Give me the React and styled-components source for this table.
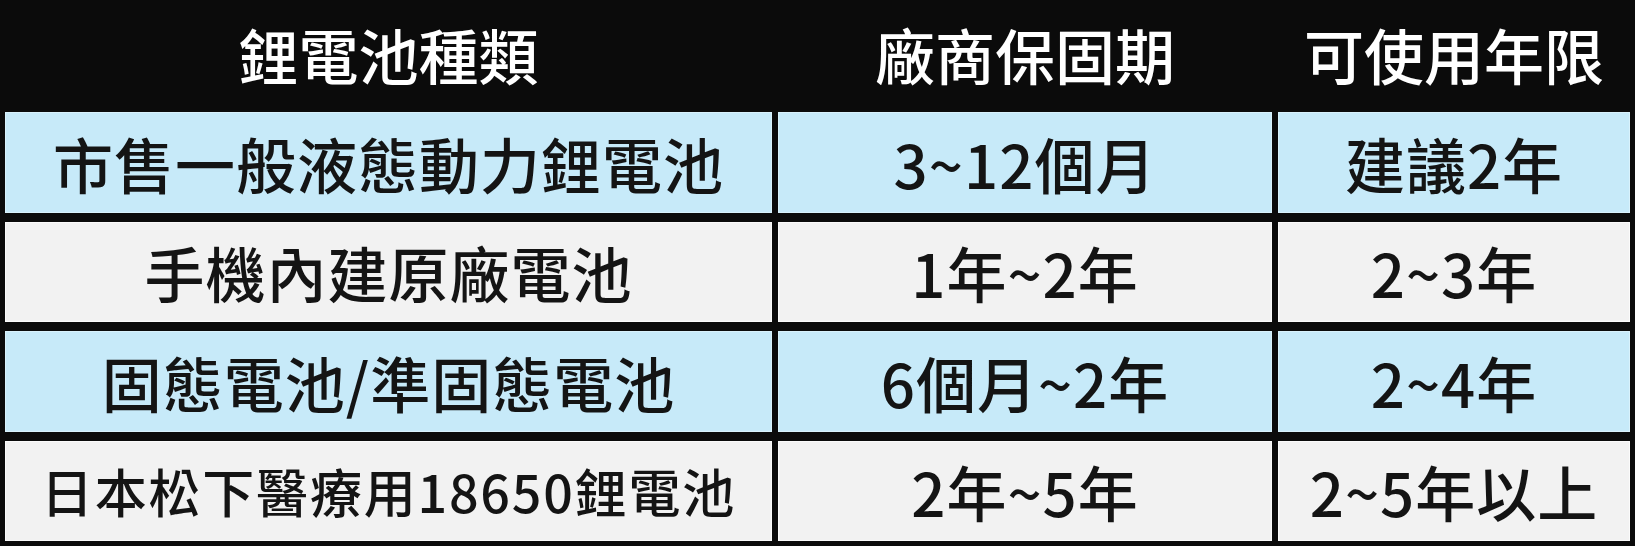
import React from "react";
import styled, { createGlobalStyle } from "styled-components";

const Global = createGlobalStyle`
  html, body { margin: 0; padding: 0; background: #ffffff; }
  body { font-family: "Noto Sans CJK TC", "Noto Sans", sans-serif; }
`;

const Table = styled.div`
  display: grid;
  width: 1635px;
  box-sizing: border-box;
  grid-template-columns: 767px 494px 352px;
  grid-template-rows: 103px 101px 100px 101px 100px;
  column-gap: 6px;
  row-gap: 9px;
  padding: 0 5px 5px 5px;
  background: #0b0b0b;
`;

const HeadCell = styled.div`
  display: flex;
  align-items: center;
  justify-content: center;
  padding-top: 4px;
  background: #0b0b0b;
  color: #ffffff;
  font-family: "Noto Sans CJK TC", sans-serif;
  font-weight: 500;
  font-size: 60px;
  line-height: 1;
`;

const Cell = styled.div`
  display: flex;
  align-items: center;
  justify-content: center;
  background: ${(p) => (p.$tone === "blue" ? "#c7eaf9" : "#f2f2f2")};
  box-shadow: inset 0 0 0 1px ${(p) => (p.$tone === "blue" ? "#d9f2fc" : "#fbfbfb")};
  color: #141414;
  font-family: "Noto Sans CJK TC", sans-serif;
  font-weight: 500;
  font-size: ${(p) => p.$size || 60}px;
  line-height: 1;
  letter-spacing: ${(p) => p.$spacing || 0}px;
  white-space: nowrap;
`;

const headers = ["鋰電池種類", "廠商保固期", "可使用年限"];

const rows = [
  { tone: "blue", cells: ["市售一般液態動力鋰電池", "3~12個月", "建議2年"] },
  { tone: "grey", cells: ["手機內建原廠電池", "1年~2年", "2~3年"] },
  { tone: "blue", cells: ["固態電池/準固態電池", "6個月~2年", "2~4年"] },
  { tone: "grey", cells: ["日本松下醫療用18650鋰電池", "2年~5年", "2~5年以上"], small: true },
];

export default function App() {
  return (
    <>
      <Global />
      <Table>
        {headers.map((h) => (
          <HeadCell key={h}>{h}</HeadCell>
        ))}
        {rows.map((r, i) =>
          r.cells.map((c, j) => (
            <Cell
              key={`${i}-${j}`}
              $tone={r.tone}
              $size={r.small && j === 0 ? 52 : 60}
              $spacing={r.small && j === 0 ? 1.8 : 1}
            >
              {c}
            </Cell>
          ))
        )}
      </Table>
    </>
  );
}
